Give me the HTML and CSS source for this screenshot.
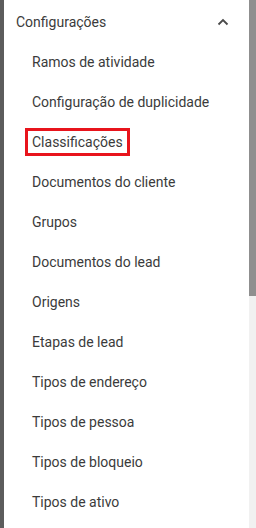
FILE: index.html
```html
<!DOCTYPE html>
<html lang="pt-BR">
<head>
    <meta charset="UTF-8">
    <title>Configurações</title>
    <link rel="stylesheet" href="styles.css">
</head>
<body>
    <div class="frame">
        <div class="edge"></div>
        <nav class="menu">
            <div class="menu-head">
                <span>Configurações</span>
                <svg class="chevron" width="12" height="8" viewBox="0 0 12 8">
                    <path d="M1.5 6.5 L6 2 L10.5 6.5" fill="none" stroke="#4a4a4a" stroke-width="1.8" />
                </svg>
            </div>
            <ul class="menu-list">
                <li>Ramos de atividade</li>
                <li>Configuração de duplicidade</li>
                <li><span class="marked">Classificações</span></li>
                <li>Documentos do cliente</li>
                <li>Grupos</li>
                <li>Documentos do lead</li>
                <li>Origens</li>
                <li>Etapas de lead</li>
                <li>Tipos de endereço</li>
                <li>Tipos de pessoa</li>
                <li>Tipos de bloqueio</li>
                <li>Tipos de ativo</li>
            </ul>
        </nav>
        <div class="scroll">
            <div class="thumb"></div>
        </div>
    </div>
</body>
</html>
```

FILE: styles.css
```css
html,
body {
    margin: 0;
    padding: 0;
}

body {
    font-family: Roboto, "Liberation Sans", sans-serif;
    font-size: 14px;
    color: #3b3b3b;
    background: #fff;
}

.frame {
    display: flex;
    height: 528px;
    overflow: hidden;
}

.edge {
    width: 4px;
    background: #5c5c5c;
}

.menu {
    flex: 1;
    background: #fff;
    padding-top: 2px;
}

.menu-head {
    height: 40px;
    display: flex;
    align-items: center;
    justify-content: space-between;
    padding: 0 20px 0 12px;
}

.chevron {
    display: block;
}

.menu-list {
    list-style: none;
    margin: 0;
    padding: 0;
}

.menu-list li {
    height: 40px;
    display: flex;
    align-items: center;
    padding-left: 28px;
}

.marked {
    margin-left: -7px;
    padding: 3px 4px 3px 4px;
    border: 3px solid #e8141c;
}

.scroll {
    width: 7px;
    background: #f1f1f1;
}

.thumb {
    height: 296px;
    background: #8f8f8f;
}
```
